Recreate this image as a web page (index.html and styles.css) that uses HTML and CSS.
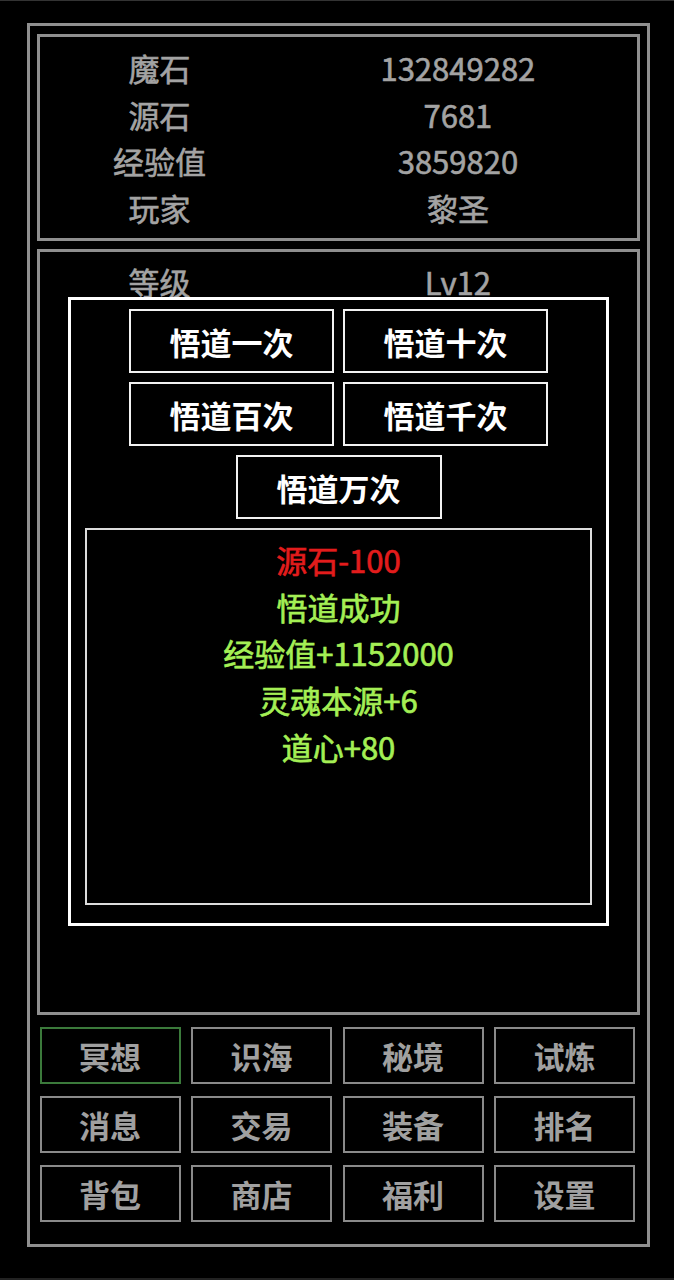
FILE: index.html
```html
<!DOCTYPE html>
<html lang="zh-CN">
<head>
<meta charset="utf-8">
<title>悟道</title>
<link rel="stylesheet" href="styles.css">
</head>
<body>
<div class="frame">
  <div class="panel stats">
    <div class="row"><span class="label">魔石</span><span class="value">132849282</span></div>
    <div class="row"><span class="label">源石</span><span class="value">7681</span></div>
    <div class="row"><span class="label">经验值</span><span class="value">3859820</span></div>
    <div class="row"><span class="label">玩家</span><span class="value">黎圣</span></div>
  </div>
  <div class="panel detail">
    <div class="row"><span class="label">等级</span><span class="value">Lv12</span></div>
    <div class="popup">
      <div class="actions">
        <div class="act">悟道一次</div>
        <div class="act">悟道十次</div>
        <div class="act">悟道百次</div>
        <div class="act">悟道千次</div>
        <div class="act wide">悟道万次</div>
      </div>
      <div class="log">
        <div class="line cost">源石-100</div>
        <div class="line gain">悟道成功</div>
        <div class="line gain">经验值+1152000</div>
        <div class="line gain">灵魂本源+6</div>
        <div class="line gain">道心+80</div>
      </div>
    </div>
  </div>
  <div class="menu">
    <div class="btn active">冥想</div>
    <div class="btn">识海</div>
    <div class="btn">秘境</div>
    <div class="btn">试炼</div>
    <div class="btn">消息</div>
    <div class="btn">交易</div>
    <div class="btn">装备</div>
    <div class="btn">排名</div>
    <div class="btn">背包</div>
    <div class="btn">商店</div>
    <div class="btn">福利</div>
    <div class="btn">设置</div>
  </div>
</div>
</body>
</html>
```

FILE: styles.css
```css
* { box-sizing: border-box; }

html { background: #000; }

body {
  margin: 0;
  min-height: 1280px;
  background: #000;
  font-family: "Noto Sans CJK SC", "Noto Sans", sans-serif;
  box-shadow: inset 0 1px #333, inset 0 -2px #222;
  padding-top: 23px;
}

.frame {
  margin-left: 27px;
  width: 623px;
  height: 1224px;
  border: 3px solid #8f8f8f;
  padding: 8px 7px 0 7px;
}

.panel {
  border: 3px solid #8f8f8f;
}

.stats {
  height: 207px;
  padding-top: 8px;
}

.detail {
  position: relative;
  margin-top: 8px;
  height: 766px;
  padding-top: 7px;
}

.row {
  display: flex;
  font-size: 31px;
  line-height: 46.67px;
  font-weight: 400;
  color: #a3a3a3;
  -webkit-text-stroke: 0.6px currentColor;
}

.label {
  width: 40%;
  text-align: center;
}

.value {
  width: 60%;
  text-align: center;
}

.popup {
  position: absolute;
  left: 28px;
  top: 45px;
  width: 541px;
  height: 629px;
  background: #000;
  border: 3px solid #fff;
  padding-top: 9px;
  -webkit-text-stroke: 0;
}

.actions {
  display: grid;
  grid-template-columns: 205px 205px;
  column-gap: 9px;
  row-gap: 9px;
  justify-content: center;
}

.act {
  height: 64px;
  border: 2px solid #f2f2f2;
  color: #fff;
  font-size: 31px;
  font-weight: 700;
  display: flex;
  align-items: center;
  justify-content: center;
}

.act.wide {
  grid-column: 1 / span 2;
  justify-self: center;
  width: 206px;
}

.log {
  width: 507px;
  height: 377px;
  margin: 9px auto 0;
  border: 2px solid #dcdcdc;
  padding-top: 7px;
  text-align: center;
}

.line {
  font-size: 31px;
  line-height: 46.67px;
  font-weight: 400;
  -webkit-text-stroke: 0.7px currentColor;
}

.cost { color: #e31c1c; }
.gain { color: #a4ef55; }

.menu {
  margin-top: 12px;
  margin-left: 2.5px;
  display: grid;
  grid-template-columns: repeat(4, 141px);
  column-gap: 10.5px;
  row-gap: 12px;
}

.btn {
  height: 57px;
  border: 2px solid #8a8a8a;
  color: #a0a0a0;
  font-size: 31px;
  font-weight: 700;
  display: flex;
  align-items: center;
  justify-content: center;
}

.btn.active {
  border-color: #3b7a3b;
}
```
